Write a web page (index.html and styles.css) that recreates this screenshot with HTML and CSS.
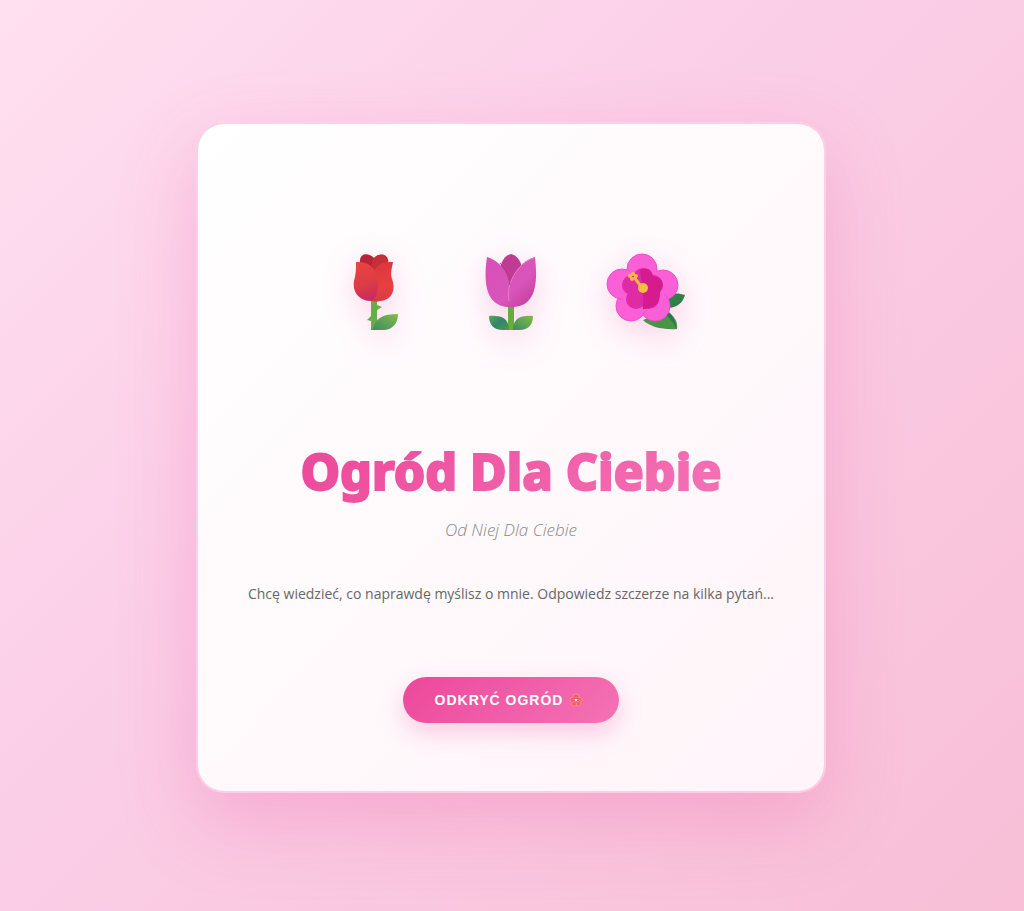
FILE: index.html
```html
<!DOCTYPE html>
<html lang="pl">
<head>
<meta charset="utf-8">
<meta name="viewport" content="width=device-width, initial-scale=1">
<title>Ogród Dla Ciebie</title>
<link rel="stylesheet" href="styles.css">
</head>
<body class="page">
<main class="card">
  <div class="flowers">
    <svg class="flower" viewBox="0 0 78 78" role="img" aria-label="Róża">
      <defs>
        <linearGradient id="rose" x1=".2" y1="0" x2=".4" y2="1"><stop offset="0" stop-color="#e84444"/><stop offset=".6" stop-color="#dc3c45"/><stop offset="1" stop-color="#cc2a60"/></linearGradient>
        <linearGradient id="roseRight" x1="0" y1="0" x2="0" y2="1"><stop offset="0" stop-color="#dc373c"/><stop offset=".6" stop-color="#e8403f"/><stop offset="1" stop-color="#d63a48"/></linearGradient>
        <linearGradient id="leaf" x1="0" y1="1" x2="1" y2="0"><stop offset="0" stop-color="#3c8a66"/><stop offset="1" stop-color="#83bd45"/></linearGradient>
        <linearGradient id="leafFlip" x1="0" y1="0" x2="1" y2="1"><stop offset="0" stop-color="#5da658"/><stop offset=".5" stop-color="#31846a"/><stop offset="1" stop-color="#509c4a"/></linearGradient>
      </defs>
      <path d="M34 45h6v7l5 2-5 3v20h-6V68l-4-1 4-4z" fill="#67ae45"/>
      <path d="M36 76c2-11 10-15 25-15 0 10-6 16-15 16H34z" fill="url(#leaf)"/>
      <path d="M23 10c-1-10 8-11 14-5 7-7 16-3 14 6L39 20z" fill="#b92336"/>
      <path d="M37 5c-3 4-3 8 0 13 5-5 9-8 14-8C50 0 41 0 37 5z" fill="#c72f38"/>
      <path d="M56 9c-12-1-19 4-21 15l-4 20c2 5 8 5 12 4 12-1 16-11 12-22-2-6 0-11 1-17z" fill="url(#roseRight)"/>
      <path d="M19 9c13-1 20 6 22 18 1 9-2 17-5 21-13 1-21-8-19-20 2-7 2-12 2-19z" fill="url(#rose)"/>
    </svg>
    <svg class="flower" viewBox="0 0 78 78" role="img" aria-label="Tulipan">
      <defs>
        <linearGradient id="tulip" gradientUnits="userSpaceOnUse" x1="15" y1="10" x2="60" y2="55"><stop offset="0" stop-color="#d850b8"/><stop offset=".6" stop-color="#d955ba"/><stop offset="1" stop-color="#bf3b98"/></linearGradient>
      </defs>
      <path d="M36 48h6v29h-6z" fill="#68ad3b"/>
      <path d="M17 63c13-1 20 3 20 14H31c-10 0-14-6-14-14z" fill="url(#leafFlip)"/>
      <path d="M61 63c-13-1-20 3-20 14h6c10 0 14-6 14-14z" fill="url(#leaf)"/>
      <path d="M39 1c-6 1-11 8-11 18l10 18 12-20C50 9 45 2 39 1z" fill="#c03c94"/>
      <path d="M15 4c11 3 20 13 23 27C42 18 51 7 63 4c4 34-3 50-24 50S10 38 15 4z" fill="url(#tulip)"/>
      <path d="M62 5C51 8 42 19 38 31c-2 6-2 12-1 17" fill="none" stroke="#e67bcb" stroke-width="1"/>
      <path d="M38 32c-1-9-5-16-10-22" class="petal-line"/>
    </svg>
    <svg class="flower" viewBox="0 0 78 78" role="img" aria-label="Hibiskus">
      <path d="M56 47c6-7 14-8 22-5-2 8-9 13-17 13z" fill="#31804a"/>
      <path d="M36 67l24-9c7 5 11 10 10 18-14 1-27-2-34-9z" fill="#4a9447"/>
      <path d="M56 59c6 5 10 10 14 17-3-12-6-17-14-21z" fill="#28784b"/>
      <g fill="#fb5fd8" stroke="#ee4dc5" stroke-width="1"><circle cx="35" cy="16" r="15"/><circle cx="56" cy="32" r="15"/><circle cx="48" cy="53" r="15"/><circle cx="24" cy="53" r="15"/><circle cx="15" cy="31" r="15"/></g>
      <circle cx="36" cy="36" r="22" fill="#fb5fd8"/>
      <g fill="#df2ba5"><circle cx="36" cy="25" r="10"/><circle cx="46" cy="32" r="10"/><circle cx="42" cy="46" r="10"/><circle cx="29" cy="46" r="10"/><circle cx="25" cy="32" r="10"/><circle cx="36" cy="36" r="12"/></g>
      <path d="M36 37l-3-20c8-4 12 1 13 6 10 1 12 9 7 16 1 12-7 17-17 17z" fill="#d51b8e"/>
      <path d="M36 36L27 24" stroke="#efb83e" stroke-width="3"/>
      <g fill="#f6bf38"><circle cx="36" cy="35" r="5"/><circle cx="23" cy="23" r="2"/><circle cx="25" cy="26" r="2"/><circle cx="29" cy="23" r="2"/><circle cx="26" cy="21" r="2"/></g>
    </svg>
  </div>
  <h1 class="title">Ogród Dla Ciebie</h1>
  <p class="subtitle">Od Niej Dla Ciebie</p>
  <p class="intro">Chcę wiedzieć, co naprawdę myślisz o mnie. Odpowiedz szczerze na kilka pytań...</p>
  <button class="cta" type="button">Odkryć ogród
    <svg class="cta-icon" viewBox="0 0 18 18" aria-hidden="true">
      <g fill="#f6606e" stroke="#fa8580" stroke-width="1"><circle cx="7" cy="6" r="3"/><circle cx="10" cy="9" r="3"/><circle cx="9" cy="12" r="3"/><circle cx="5" cy="12" r="3"/><circle cx="4" cy="9" r="3"/></g>
      <circle cx="7" cy="9" r="3" fill="#e5476b"/><path d="M7 6v6M4 8l6 3M10 8l-6 3" stroke="#f88d98" stroke-width="1"/><circle cx="7" cy="9" r="1" fill="#fff"/>
    </svg>
  </button>
</main>
</body>
</html>
```
FILE: styles.css
```css
* {
  box-sizing: border-box;
}

.page {
  margin: 0;
  min-height: 100vh;
  padding: 24px 26px 20px 24px;
  display: flex;
  align-items: center;
  justify-content: center;
  background: linear-gradient(135deg, #ffe0f0 0%, #fbcfe8 40%, #f8bfd6 100%);
  font-family: "Open Sans", "Noto Sans", sans-serif;
}

.card {
  width: 100%;
  max-width: 630px;
  padding: 129px 48px 68px;
  display: flex;
  flex-direction: column;
  align-items: center;
  border: 2px solid rgba(251, 207, 232, 0.8);
  border-radius: 28px;
  background: linear-gradient(135deg, #ffffff 0%, #fff4f9 100%) padding-box;
  box-shadow: 0 28px 76px rgba(236, 72, 153, 0.25);
  text-align: center;
}

.flowers {
  display: flex;
  gap: 57px;
  margin-bottom: 108px;
}

.flower {
  width: 78px;
  height: 78px;
  overflow: visible;
  filter: drop-shadow(0 9px 16px rgba(236, 72, 153, 0.22));
}

.petal-line {
  fill: none;
  stroke: #b23a90;
  stroke-width: 1;
}

.title {
  margin: 0 0 15px;
  font-family: "Noto Sans", "Open Sans", sans-serif;
  font-size: 50px;
  font-weight: 800;
  line-height: 64px;
  background: linear-gradient(135deg, #ec4899, #f472b6);
  background-clip: text;
  color: transparent;
  -webkit-text-stroke: 2px transparent;
}

.subtitle {
  margin: 0 0 39px;
  color: #888;
  font-size: 17px;
  font-style: italic;
  font-weight: 300;
  line-height: 24px;
}

.intro {
  margin: 0 0 70px;
  color: #666;
  font-size: 14px;
  line-height: 26px;
}

.cta {
  min-height: 46px;
  padding: 0 32px;
  display: flex;
  align-items: center;
  gap: 6px;
  border: 0;
  border-radius: 23px;
  background: linear-gradient(135deg, #ec4899, #f472b6);
  box-shadow: 0 10px 24px rgba(236, 72, 153, 0.25);
  color: #fff;
  font-family: "Liberation Sans", Arial, sans-serif;
  font-size: 14px;
  font-weight: 700;
  letter-spacing: 1px;
  text-transform: uppercase;
  cursor: pointer;
}

.cta-icon {
  width: 18px;
  height: 18px;
}
```
